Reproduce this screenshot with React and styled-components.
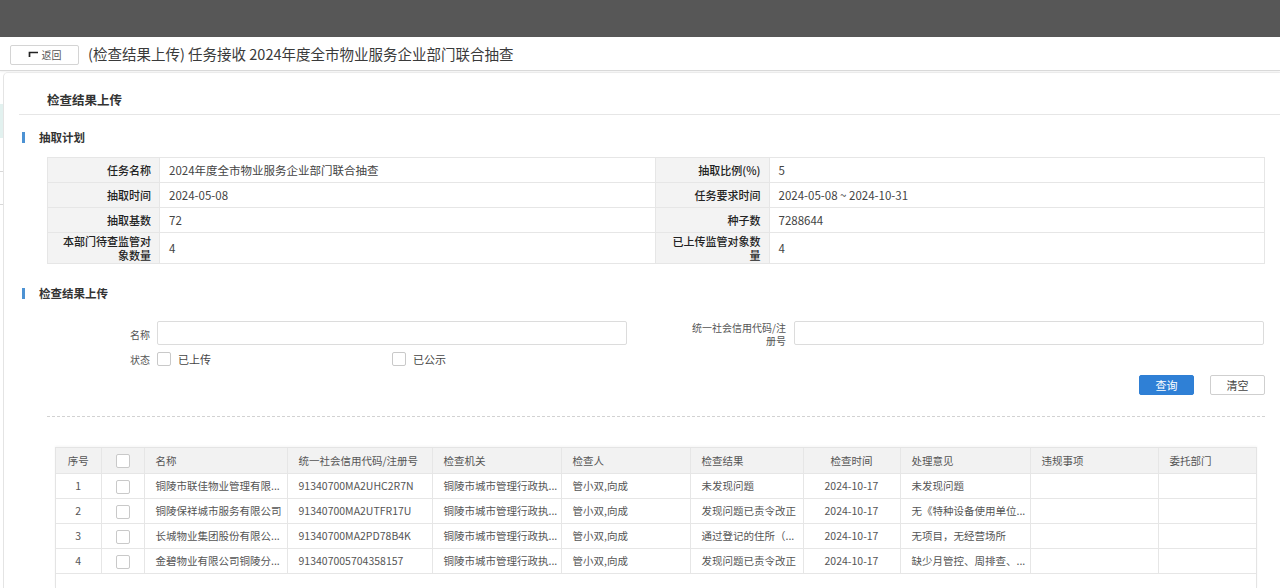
import React from "react";
import styled, { createGlobalStyle } from "styled-components";

const GlobalStyle = createGlobalStyle`
  html, body { margin: 0; padding: 0; background: #fff; }
  body {
    font-family: "Noto Sans CJK SC", "Noto Sans", "Liberation Sans", sans-serif;
    color: #333;
  }
  * { box-sizing: border-box; }
`;

const Page = styled.div`
  width: 1280px;
  height: 588px;
  overflow: hidden;
  display: flex;
  flex-direction: column;
`;

const TopBar = styled.div`
  height: 37px;
  flex: none;
  background: #575757;
`;

const Header = styled.div`
  height: 34px;
  flex: none;
  display: flex;
  align-items: center;
  padding-left: 10px;
  border-bottom: 1px solid #d9d9d9;
  box-shadow: 0 1px 2px rgba(0, 0, 0, 0.06);
  position: relative;
  z-index: 1;
`;

const BackButton = styled.button`
  width: 69px;
  height: 20px;
  margin-top: 2px;
  border: 1px solid #d4d4d4;
  border-radius: 2px;
  background: #fff;
  display: flex;
  align-items: center;
  justify-content: center;
  gap: 3px;
  font-family: inherit;
  font-size: 10px;
  color: #555;
  padding: 0;
`;

const PageTitle = styled.div`
  margin-left: 9px;
  font-size: 14.5px;
  color: #3a3a3a;
  line-height: 20px;
`;

const Body = styled.div`
  flex: 1;
  display: flex;
  min-height: 0;
`;

const SideRail = styled.div`
  width: 3px;
  flex: none;
  display: flex;
  flex-direction: column;
`;

const RailBlock = styled.div`
  margin-top: ${(p) => p.$top}px;
  height: ${(p) => p.$h}px;
  background: ${(p) => p.$bg};
`;

const Panel = styled.div`
  flex: 1;
  margin-top: 1px;
  border-left: 1px solid #e4e4e4;
  border-top: 1px solid #efefef;
  border-top-left-radius: 5px;
  display: flex;
  flex-direction: column;
  min-width: 0;
`;

const PanelHeading = styled.div`
  margin-left: 15px;
  padding-left: 28px;
  padding-top: 11px;
  height: 42px;
  flex: none;
  display: flex;
  align-items: center;
  border-bottom: 1px solid #e6e6e6;
  font-size: 12.5px;
  font-weight: 700;
  color: #333;
`;

const SectionTitle = styled.div`
  margin: ${(p) => p.$top}px 0 0 18px;
  height: 14px;
  flex: none;
  display: flex;
  align-items: center;
  gap: 14px;
  font-size: 11.5px;
  font-weight: 700;
  color: #333;
  &::before {
    content: "";
    width: 3px;
    height: 11px;
    background: #4d92d3;
  }
`;

const DetailGrid = styled.div`
  margin: 13px 15px 0 43px;
  display: grid;
  grid-template-columns: 112px 1fr 114px 1fr;
  border-top: 1px solid #e6e6e6;
  border-left: 1px solid #e6e6e6;
  flex: none;
`;

const DetailLabel = styled.div`
  min-height: 25px;
  padding: 1px 8px;
  background: #f3f3f3;
  border-right: 1px solid #e6e6e6;
  border-bottom: 1px solid #e6e6e6;
  display: flex;
  align-items: center;
  justify-content: flex-end;
  text-align: right;
  font-size: 11px;
  font-weight: 500;
  line-height: 14px;
  color: #222;
`;

const DetailValue = styled.div`
  min-height: 25px;
  padding: 1px 9px;
  border-right: 1px solid #e6e6e6;
  border-bottom: 1px solid #e6e6e6;
  display: flex;
  align-items: center;
  font-size: 11.5px;
  line-height: 14px;
  color: #444;
`;

const FormGrid = styled.div`
  margin-top: 21px;
  display: grid;
  grid-template-columns: 153px 470px 167px 470px;
  row-gap: 5px;
  flex: none;
`;

const FieldLabel = styled.div`
  display: flex;
  align-items: center;
  justify-content: flex-end;
  text-align: right;
  padding: 0 ${(p) => p.$right}px 0 ${(p) => p.$left}px;
  font-size: 10px;
  line-height: 13px;
  color: #555;
`;

const TextInput = styled.input`
  height: 24px;
  width: 100%;
  border: 1px solid #dcdcdc;
  border-radius: 2px;
  outline: none;
  background: #fff;
`;

const CheckGroup = styled.div`
  grid-column: 2 / span 3;
  display: flex;
  align-items: center;
  height: 14px;
`;

const CheckOption = styled.label`
  width: ${(p) => p.$w}px;
  display: flex;
  align-items: center;
  gap: 7px;
  font-size: 11px;
  color: #444;
`;

const Box = styled.span`
  width: 14px;
  height: 14px;
  flex: none;
  border: 1px solid #c9c9c9;
  border-radius: 2px;
  background: #fff;
  display: inline-block;
`;

const ButtonRow = styled.div`
  margin-top: 9px;
  padding-right: 15px;
  display: flex;
  justify-content: flex-end;
  gap: 16px;
  flex: none;
`;

const ActionButton = styled.button`
  width: 55px;
  height: 20px;
  padding: 0;
  border-radius: 2px;
  font-family: inherit;
  font-size: 11px;
  border: 1px solid ${(p) => (p.$primary ? "#2f7fd4" : "#cfcfcf")};
  background: ${(p) => (p.$primary ? "#2f80d6" : "#fff")};
  color: ${(p) => (p.$primary ? "#fff" : "#444")};
`;

const Divider = styled.div`
  margin: 21px 15px 0 43px;
  border-top: 1px dashed #d2d2d2;
  flex: none;
`;

const TableFrame = styled.div`
  margin: 30px 23px 0 51px;
  flex: 1;
  border: 1px solid #e4e4e4;
  border-bottom: none;
  box-shadow: 0 -1px 2px rgba(0, 0, 0, 0.04);
`;

const Table = styled.table`
  width: 100%;
  table-layout: fixed;
  border-collapse: collapse;
  font-size: 10.5px;
  color: #555;
`;

const Th = styled.th`
  height: 25px;
  background: #f2f2f2;
  font-weight: 400;
  text-align: ${(p) => p.$align || "left"};
  padding: 0 ${(p) => (p.$align === "center" ? 0 : 11)}px;
  border-left: 1px solid #e6e6e6;
  border-bottom: 1px solid #e6e6e6;
  &:first-child { border-left: none; }
`;

const Td = styled.td`
  height: 25px;
  text-align: ${(p) => p.$align || "left"};
  padding: 0 ${(p) => (p.$align === "center" ? 0 : 11)}px;
  border-left: 1px solid #e6e6e6;
  border-bottom: 1px solid #e6e6e6;
  white-space: nowrap;
  overflow: hidden;
  &:first-child { border-left: none; }
`;

const CellBox = styled(Box)`
  vertical-align: middle;
`;

const BackIcon = () => (
  <svg width="11" height="7" viewBox="0 0 11 7">
    <path d="M1.5 6 V1.5 H10" fill="none" stroke="#222" strokeWidth="1.7" />
  </svg>
);

const details = [
  ["任务名称", "2024年度全市物业服务企业部门联合抽查", "抽取比例(%)", "5"],
  ["抽取时间", "2024-05-08", "任务要求时间", "2024-05-08 ~ 2024-10-31"],
  ["抽取基数", "72", "种子数", "7288644"],
  ["本部门待查监管对象数量", "4", "已上传监管对象数量", "4"],
];

const columns = [
  { title: "序号", w: 45, align: "center" },
  { title: "box", w: 43, align: "center" },
  { title: "名称", w: 143 },
  { title: "统一社会信用代码/注册号", w: 145 },
  { title: "检查机关", w: 129 },
  { title: "检查人", w: 129 },
  { title: "检查结果", w: 113 },
  { title: "检查时间", w: 97, align: "center" },
  { title: "处理意见", w: 130 },
  { title: "违规事项", w: 128 },
  { title: "委托部门", w: 98 },
];

const rows = [
  ["1", "", "铜陵市联佳物业管理有限...", "91340700MA2UHC2R7N", "铜陵市城市管理行政执...", "管小双,向成", "未发现问题", "2024-10-17", "未发现问题", "", ""],
  ["2", "", "铜陵保祥城市服务有限公司", "91340700MA2UTFR17U", "铜陵市城市管理行政执...", "管小双,向成", "发现问题已责令改正", "2024-10-17", "无《特种设备使用单位...", "", ""],
  ["3", "", "长城物业集团股份有限公...", "91340700MA2PD78B4K", "铜陵市城市管理行政执...", "管小双,向成", "通过登记的住所（...", "2024-10-17", "无项目，无经营场所", "", ""],
  ["4", "", "金碧物业有限公司铜陵分...", "913407005704358157", "铜陵市城市管理行政执...", "管小双,向成", "发现问题已责令改正", "2024-10-17", "缺少月管控、周排查、...", "", ""],
];

export default function App() {
  return (
    <>
      <GlobalStyle />
      <Page>
        <TopBar />
        <Header>
          <BackButton>
            <BackIcon />
            返回
          </BackButton>
          <PageTitle>(检查结果上传) 任务接收 2024年度全市物业服务企业部门联合抽查</PageTitle>
        </Header>
        <Body>
          <SideRail>
            <RailBlock $top={33} $h={34} $bg="#e2f1ef" />
            <RailBlock $top={33} $h={1} $bg="#d8d8d8" />
            <RailBlock $top={32} $h={1} $bg="#d8d8d8" />
          </SideRail>
          <Panel>
            <PanelHeading>检查结果上传</PanelHeading>
            <SectionTitle $top={15}>抽取计划</SectionTitle>
            <DetailGrid>
              {details.map((r) => (
                <React.Fragment key={r[0]}>
                  <DetailLabel>{r[0]}</DetailLabel>
                  <DetailValue>{r[1]}</DetailValue>
                  <DetailLabel>{r[2]}</DetailLabel>
                  <DetailValue>{r[3]}</DetailValue>
                </React.Fragment>
              ))}
            </DetailGrid>
            <SectionTitle $top={22}>检查结果上传</SectionTitle>
            <FormGrid>
              <FieldLabel $left={0} $right={7}>名称</FieldLabel>
              <TextInput />
              <FieldLabel $left={64} $right={8}>统一社会信用代码/注册号</FieldLabel>
              <TextInput />
              <FieldLabel $left={0} $right={7}>状态</FieldLabel>
              <CheckGroup>
                <CheckOption $w={235}>
                  <Box />
                  已上传
                </CheckOption>
                <CheckOption $w={120}>
                  <Box />
                  已公示
                </CheckOption>
              </CheckGroup>
            </FormGrid>
            <ButtonRow>
              <ActionButton $primary>查询</ActionButton>
              <ActionButton>清空</ActionButton>
            </ButtonRow>
            <Divider />
            <TableFrame>
              <Table>
                <colgroup>
                  {columns.map((c, i) => (
                    <col key={i} style={{ width: c.w }} />
                  ))}
                </colgroup>
                <thead>
                  <tr>
                    {columns.map((c, i) => (
                      <Th key={i} $align={c.align}>
                        {c.title === "box" ? <CellBox /> : c.title}
                      </Th>
                    ))}
                  </tr>
                </thead>
                <tbody>
                  {rows.map((r) => (
                    <tr key={r[0]}>
                      {r.map((v, i) => (
                        <Td key={i} $align={columns[i].align}>
                          {i === 1 ? <CellBox /> : v}
                        </Td>
                      ))}
                    </tr>
                  ))}
                </tbody>
              </Table>
            </TableFrame>
          </Panel>
        </Body>
      </Page>
    </>
  );
}
